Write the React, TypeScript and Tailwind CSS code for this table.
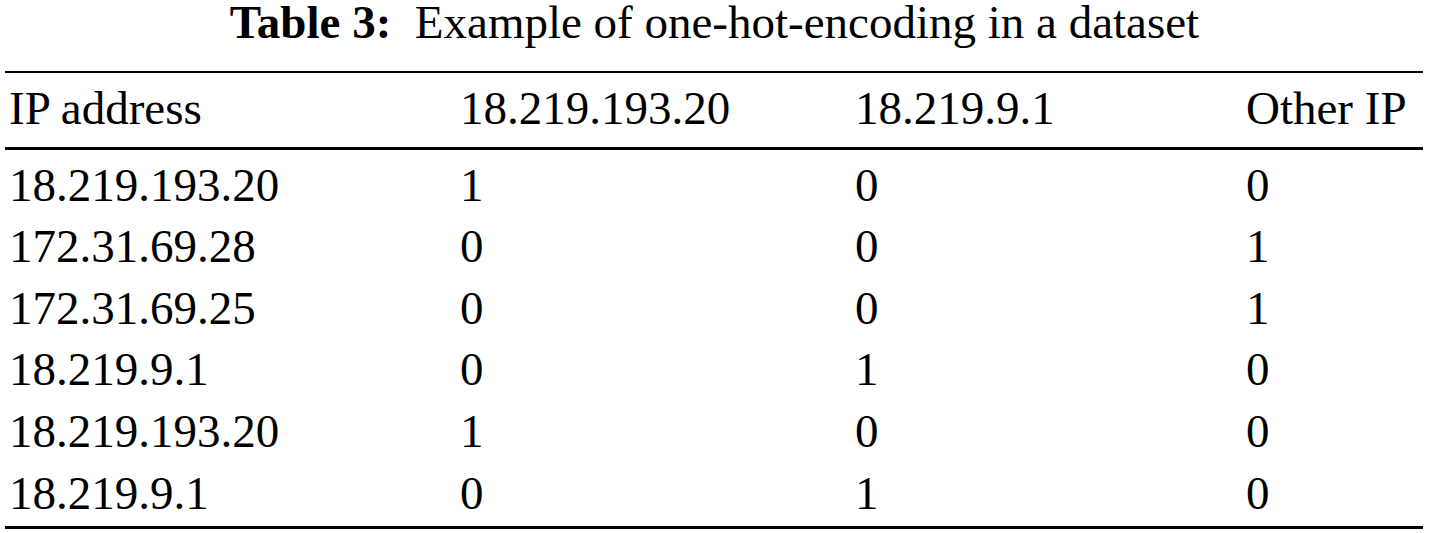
const header = ['IP address', '18.219.193.20', '18.219.9.1', 'Other IP'];

const rows: string[][] = [
  ['18.219.193.20', '1', '0', '0'],
  ['172.31.69.28', '0', '0', '1'],
  ['172.31.69.25', '0', '0', '1'],
  ['18.219.9.1', '0', '1', '0'],
  ['18.219.193.20', '1', '0', '0'],
  ['18.219.9.1', '0', '1', '0'],
];

const gridCols = 'grid grid-cols-[451px_395px_391px_1fr]';

export default function App() {
  return (
    <div className="w-[1429px] h-[533px] bg-white text-black font-['Liberation_Serif','Times_New_Roman',serif] overflow-hidden pt-px">
      {/* Caption */}
      <div className="-mt-[5px] text-center text-[47px] leading-[52px] whitespace-pre">
        <span className="font-bold">Table 3:</span>
        {'  '}Example of one-hot-encoding in a dataset
      </div>

      {/* Table */}
      <div className="ml-[5px] mt-[23px] w-[1418px] border-t-2 border-b-[3px] border-black text-[47px] leading-[61.6px]">
        <div className={`${gridCols} pt-[5px] pb-[7px] border-b-[3px] border-black`}>
          {header.map((h) => (
            <div key={h} className="pl-[4px] whitespace-nowrap">
              {h}
            </div>
          ))}
        </div>
        <div className="pt-[5px] pb-[2px]">
          {rows.map((row, i) => (
            <div key={i} className={gridCols}>
              {row.map((cell, j) => (
                <div key={j} className="pl-[4px] whitespace-nowrap">
                  {cell}
                </div>
              ))}
            </div>
          ))}
        </div>
      </div>
    </div>
  );
}
